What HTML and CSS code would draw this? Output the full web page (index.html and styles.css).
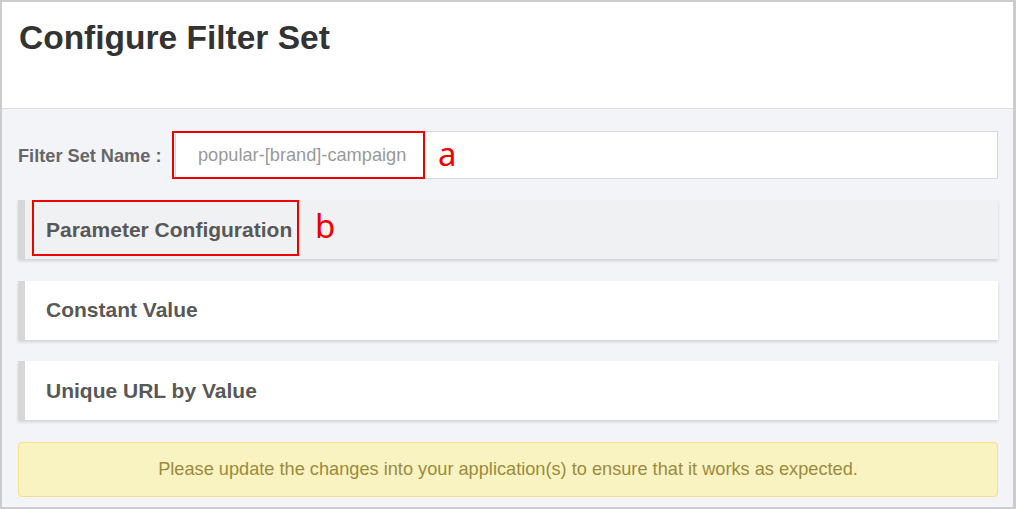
FILE: index.html
```html
<!DOCTYPE html>
<html>
<head>
<meta charset="utf-8">
<link rel="stylesheet" href="styles.css">
</head>
<body>
<div class="frame">
  <div class="header">
    <h1 class="title">Configure Filter Set</h1>
  </div>
  <div class="content">
    <div class="name-row">
      <div class="label">Filter Set Name :</div>
      <div class="input">
        <span class="input-text">popular-[brand]-campaign</span>
        <div class="mark mark-a"></div>
        <span class="note note-a">a</span>
      </div>
    </div>
    <div class="panel panel-active">
      <span class="panel-title">Parameter Configuration</span>
      <div class="mark mark-b"></div>
      <span class="note note-b">b</span>
    </div>
    <div class="panel">
      <span class="panel-title">Constant Value</span>
    </div>
    <div class="panel">
      <span class="panel-title">Unique URL by Value</span>
    </div>
    <div class="alert">Please update the changes into your application(s) to ensure that it works as expected.</div>
  </div>
</div>
</body>
</html>
```

FILE: styles.css
```css
* { box-sizing: border-box; }
html, body { margin: 0; padding: 0; }
body {
  font-family: "Liberation Sans", Arial, sans-serif;
  background: #ffffff;
}
.frame {
  width: 1016px;
  height: 509px;
  border: 2px solid #cccccc;
  border-right-width: 3px;
  background: #f3f4f8;
  display: flex;
  flex-direction: column;
}
.header {
  height: 107px;
  background: #ffffff;
  border-bottom: 1px solid #dcdcdc;
  padding: 17px 0 0 17px;
  flex-shrink: 0;
}
.title {
  margin: 0;
  font-size: 33.5px;
  font-weight: bold;
  color: #333333;
  line-height: 1.149;
}
.content {
  padding: 22px 15px 0 16px;
  display: flex;
  flex-direction: column;
}
.name-row {
  display: flex;
  align-items: center;
  height: 48px;
}
.label {
  width: 157px;
  flex-shrink: 0;
  font-size: 18.2px;
  font-weight: bold;
  color: #666666;
  position: relative;
  top: 1px;
}
.input {
  position: relative;
  flex: 1;
  height: 48px;
  background: #ffffff;
  border: 1px solid #d8d8d8;
  display: flex;
  align-items: center;
  padding-left: 22px;
}
.input-text {
  font-size: 18.2px;
  color: #999999;
}
.mark {
  position: absolute;
  border: 2px solid #ee0000;
}
.mark-a {
  left: -4px;
  top: -1px;
  width: 253px;
  height: 48px;
}
.note {
  position: absolute;
  font-family: "Noto Sans", "Liberation Sans", sans-serif;
  font-size: 33px;
  color: #ee0000;
  line-height: 1;
}
.note-a {
  left: 262px;
  top: 5px;
}
.panel {
  position: relative;
  height: 59px;
  margin-top: 21.5px;
  background: #ffffff;
  border-left: 7px solid #d7d7d7;
  box-shadow: 0 2px 3px rgba(0, 0, 0, 0.14);
  display: flex;
  align-items: center;
  padding-left: 21px;
}
.name-row + .panel { margin-top: 21px; }
.panel-active {
  background: #f0f1f3;
}
.panel-title {
  font-size: 21px;
  font-weight: bold;
  color: #585858;
}
.mark-b {
  left: 7px;
  top: 0;
  width: 267px;
  height: 56px;
}
.note-b {
  left: 290px;
  top: 9px;
}
.alert {
  margin-top: 21.5px;
  height: 55.5px;
  background: #f9f3c1;
  border: 1px solid #f5df8a;
  border-radius: 4px;
  display: flex;
  align-items: center;
  justify-content: center;
  font-size: 18.2px;
  color: #9c8a3e;
}
```
